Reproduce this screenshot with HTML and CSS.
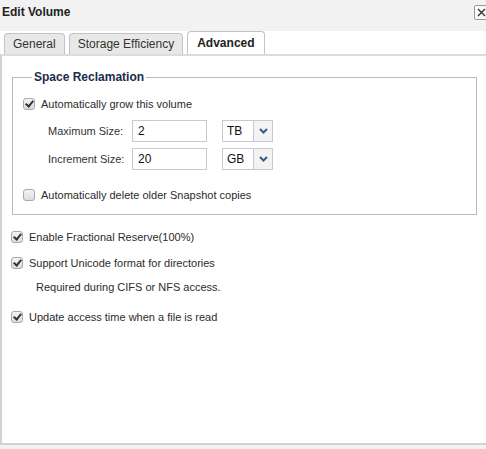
FILE: index.html
```html
<!DOCTYPE html>
<html>
<head>
<meta charset="utf-8">
<link rel="stylesheet" href="styles.css">
</head>
<body>
<div class="dialog">
  <div class="header">
    <span class="title">Edit Volume</span>
    <span class="close"><svg width="11" height="11" viewBox="0 0 11 11"><path d="M2 2 L9 9 M9 2 L2 9" stroke="#333" stroke-width="1.4"/></svg></span>
  </div>
  <div class="tabs">
    <div class="tab">General</div>
    <div class="tab">Storage Efficiency</div>
    <div class="tab active">Advanced</div>
  </div>
  <div class="panel">
    <fieldset class="group">
      <legend>Space Reclamation</legend>
      <div class="row check-row">
        <span class="cb checked"></span><span>Automatically grow this volume</span>
      </div>
      <div class="size-row">
        <span class="size-label">Maximum Size:</span>
        <span class="input">2</span>
        <span class="select"><span class="sel-val">TB</span><span class="sel-btn"><svg width="9" height="6" viewBox="0 0 9 6"><path d="M1 1 L4.5 4.5 L8 1" stroke="#3a5a8c" stroke-width="2" fill="none"/></svg></span></span>
      </div>
      <div class="size-row">
        <span class="size-label">Increment Size:</span>
        <span class="input">20</span>
        <span class="select"><span class="sel-val">GB</span><span class="sel-btn"><svg width="9" height="6" viewBox="0 0 9 6"><path d="M1 1 L4.5 4.5 L8 1" stroke="#3a5a8c" stroke-width="2" fill="none"/></svg></span></span>
      </div>
      <div class="row check-row delete-row">
        <span class="cb"></span><span>Automatically delete older Snapshot copies</span>
      </div>
    </fieldset>
    <div class="row opt first">
      <span class="cb checked"></span><span>Enable Fractional Reserve(100%)</span>
    </div>
    <div class="row opt">
      <span class="cb checked"></span><span>Support Unicode format for directories</span>
    </div>
    <div class="note">Required during CIFS or NFS access.</div>
    <div class="row opt last">
      <span class="cb checked"></span><span>Update access time when a file is read</span>
    </div>
  </div>
</div>
</body>
</html>
```
FILE: styles.css
```css
html, body {
  margin: 0;
  padding: 0;
  background: #f2f2f2;
}
body {
  font-family: "Liberation Sans", Arial, sans-serif;
  font-size: 11px;
  color: #2b2b2b;
  width: 486px;
  height: 449px;
  overflow: hidden;
}
.dialog {
  width: 490px;
}
.header {
  height: 31px;
  display: flex;
  align-items: flex-start;
  justify-content: space-between;
  background: #f2f2f2;
}
.title {
  font-weight: bold;
  font-size: 12px;
  color: #222;
  padding: 5px 0 0 2px;
}
.close {
  margin: 5px 1px 0 0;
  width: 13px;
  height: 13px;
  border: 1px solid #9a9a9a;
  border-radius: 2px;
  background: #fafafa;
  display: flex;
  align-items: center;
  justify-content: center;
}
.tabs {
  height: 23px;
  background: #fff;
  display: flex;
  align-items: flex-end;
  gap: 4px;
  padding-left: 4px;
}
.tab {
  height: 21px;
  line-height: 21px;
  box-sizing: border-box;
  border: 1px solid #c3c3c3;
  border-bottom: none;
  border-radius: 4px 4px 0 0;
  background: #e8e8e8;
  font-size: 12px;
  color: #333;
  padding: 0 8px;
}
.tab:nth-child(2) { padding: 0 8px; }
.tab.active {
  background: #fff;
  font-weight: bold;
  color: #222;
  height: 23px;
  line-height: 22px;
  padding: 0 9px;
}
.panel {
  background: #fff;
  border-top: 2px solid #dcdcdc;
  border-left: 2px solid #d2d2d2;
  border-bottom: 2px solid #d2d2d2;
  height: 387px;
  box-sizing: content-box;
}
.group {
  margin: 14px 13px 0 10px;
  border: 1px solid #b8b8cc;
  padding: 13px 0 12px 10px;
}
.group legend {
  font-weight: bold;
  font-size: 12px;
  color: #1c2b4a;
  padding: 0 2px;
  margin-left: 9px;
}
.row {
  display: flex;
  align-items: center;
  height: 14px;
}
.cb {
  width: 12px;
  height: 12px;
  box-sizing: border-box;
  border: 1px solid #a8a8a8;
  border-radius: 3px;
  background: linear-gradient(#f4f4f4, #dcdcdc);
  margin-right: 6px;
  flex: none;
  position: relative;
}
.cb.checked::after {
  content: "";
  position: absolute;
  left: 3px;
  top: 0px;
  width: 3px;
  height: 6px;
  border: solid #333;
  border-width: 0 2px 2px 0;
  transform: rotate(40deg);
}
.size-row {
  display: flex;
  align-items: center;
  height: 22px;
  margin-top: 6px;
  padding-left: 25px;
}
.check-row + .size-row { margin-top: 9px; }
.size-row + .size-row { margin-top: 6px; }
.size-label {
  width: 84px;
  color: #333;
}
.input {
  width: 75px;
  height: 22px;
  box-sizing: border-box;
  border: 1px solid #c8c8d4;
  line-height: 20px;
  padding-left: 5px;
  font-size: 12px;
  color: #111;
}
.select {
  margin-left: 15px;
  width: 51px;
  height: 22px;
  box-sizing: border-box;
  border: 1px solid #c8c8d4;
  display: flex;
}
.sel-val {
  flex: 1;
  line-height: 20px;
  padding-left: 4px;
  font-size: 12px;
  color: #111;
}
.sel-btn {
  width: 18px;
  border-left: 1px solid #c8c8d4;
  background: #f3f3f3;
  display: flex;
  align-items: center;
  justify-content: center;
}
.delete-row {
  margin-top: 18px;
}
.opt {
  padding-left: 9px;
  margin-top: 12px;
}
.opt.first {
  margin-top: 15px;
}
.opt.last {
  margin-top: 16px;
}
.note {
  padding-left: 34px;
  margin-top: 10px;
  height: 14px;
  line-height: 14px;
}
```
